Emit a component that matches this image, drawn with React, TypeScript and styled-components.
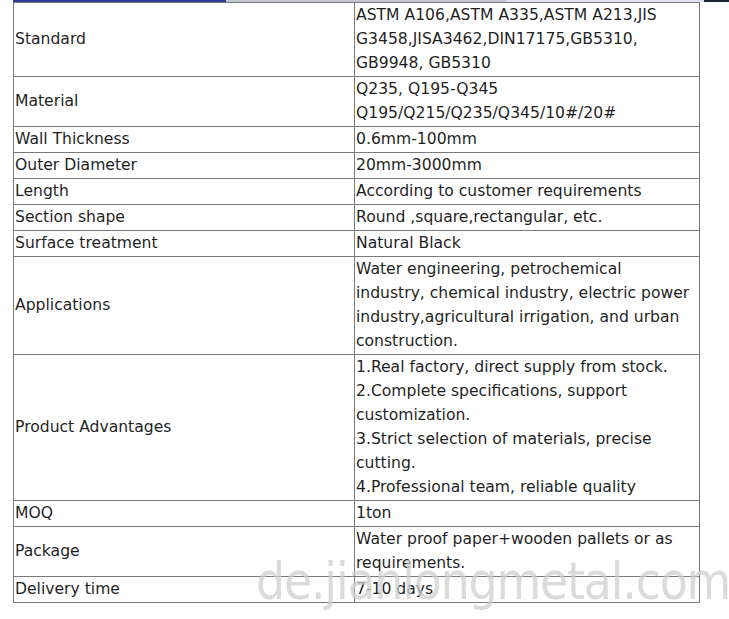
import React from 'react'
import styled, { createGlobalStyle } from 'styled-components'

const GlobalStyle = createGlobalStyle`
  html, body {
    margin: 0;
    padding: 0;
    background: #ffffff;
  }
`

const Page = styled.div`
  position: relative;
  width: 729px;
  height: 619px;
  overflow: hidden;
  padding-left: 13px;
  box-sizing: border-box;
`

const TopStrip = styled.div`
  display: flex;
  height: 2px;
  width: 716px;
`

const StripPart = styled.div<{ w: number; bg: string }>`
  width: ${({ w }) => w}px;
  background: ${({ bg }) => bg};
`

const SpecTable = styled.table`
  border-collapse: collapse;
  width: 687px;
  font-family: 'DejaVu Sans', Verdana, sans-serif;
  font-size: 15.6px;
  color: #1f1f1f;
  table-layout: fixed;
`

const Cell = styled.td<{ first?: boolean }>`
  border: 1px solid #7a7a7a;
  padding: 0 1px 1px 1px;
  line-height: 24px;
  vertical-align: middle;
  white-space: nowrap;
  width: ${({ first }) => (first ? '338px' : 'auto')};
`

const Watermark = styled.div`
  position: absolute;
  left: 256px;
  top: 552px;
  font-family: 'DejaVu Sans Condensed', 'Liberation Sans Narrow', sans-serif;
  font-weight: 200;
  font-size: 51px;
  letter-spacing: -1.2px;
  color: rgba(205, 205, 205, 0.72);
  white-space: nowrap;
  pointer-events: none;
`

const rows: [string, string[]][] = [
  ['Standard', ['ASTM A106,ASTM A335,ASTM A213,JIS', 'G3458,JISA3462,DIN17175,GB5310,', 'GB9948, GB5310']],
  ['Material', ['Q235, Q195-Q345', 'Q195/Q215/Q235/Q345/10#/20#']],
  ['Wall Thickness', ['0.6mm-100mm']],
  ['Outer Diameter', ['20mm-3000mm']],
  ['Length', ['According to customer requirements']],
  ['Section shape', ['Round ,square,rectangular, etc.']],
  ['Surface treatment', ['Natural Black']],
  ['Applications', ['Water engineering, petrochemical', 'industry, chemical industry, electric power', 'industry,agricultural irrigation, and urban', 'construction.']],
  ['Product Advantages', ['1.Real factory, direct supply from stock.', '2.Complete specifications, support', 'customization.', '3.Strict selection of materials, precise', 'cutting.', '4.Professional team, reliable quality']],
  ['MOQ', ['1ton']],
  ['Package', ['Water proof paper+wooden pallets or as', 'requirements.']],
  ['Delivery time', ['7-10 days']],
]

export default function App() {
  return (
    <Page>
      <GlobalStyle />
      <TopStrip>
        <StripPart w={213} bg="#2b3d95" />
        <StripPart w={280} bg="#c4c7d0" />
        <StripPart w={198} bg="#dde2ec" />
        <StripPart w={25} bg="#1d2333" />
      </TopStrip>
      <SpecTable>
        <tbody>
          {rows.map(([label, lines]) => (
            <tr key={label}>
              <Cell first>{label}</Cell>
              <Cell>
                {lines.map((l, i) => (
                  <React.Fragment key={i}>
                    {i > 0 && <br />}
                    {l}
                  </React.Fragment>
                ))}
              </Cell>
            </tr>
          ))}
        </tbody>
      </SpecTable>
      <Watermark>de.jianlongmetal.com</Watermark>
    </Page>
  )
}
